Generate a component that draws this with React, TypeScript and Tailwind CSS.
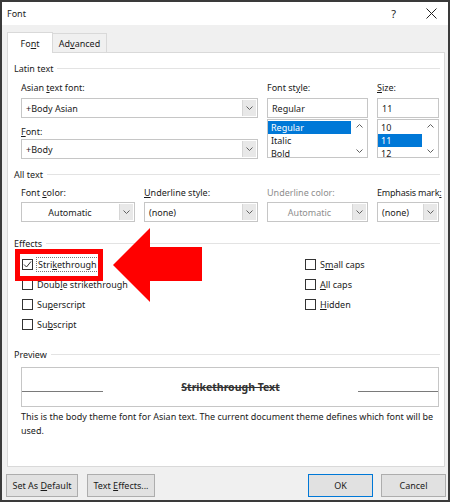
import React from 'react';

const Chev = ({ up }: { up?: boolean }) => (
  <svg width="7" height="4" viewBox="0 0 7 4">
    <polyline
      points={up ? '0.5,3.5 3.5,0.5 6.5,3.5' : '0.5,0.5 3.5,3.5 6.5,0.5'}
      fill="none"
      stroke="#606060"
      strokeWidth="1"
    />
  </svg>
);

function Combo({ value, center, disabled }: { value: string; center?: boolean; disabled?: boolean }) {
  return (
    <div className="flex h-[20px] border border-[#c6c6c6] bg-white">
      <div
        className={`flex flex-1 items-center px-[4px] ${center ? 'justify-center' : ''} ${disabled ? 'text-[#8e8e8e]' : ''}`}
      >
        {value}
      </div>
      <div className="m-px flex w-[14px] items-center justify-center border-l border-[#d6d6d6] bg-[#e8e8e8]">
        <Chev />
      </div>
    </div>
  );
}

function ListBox({ value, items, sel }: { value: string; items: string[]; sel: number }) {
  return (
    <div>
      <div className="flex h-[20px] items-center border border-[#c6c6c6] bg-white px-[4px]">{value}</div>
      <div className="mt-px flex h-[39px] border border-[#c6c6c6] bg-white">
        <div className="flex-1 pt-px">
          {items.map((it, i) => (
            <div
              key={it}
              className={`h-[13px] px-[3px] leading-[13px] ${i === sel ? 'bg-[#0078d7] text-white' : ''}`}
            >
              {it}
            </div>
          ))}
        </div>
        <div className="flex w-[16px] flex-col items-center justify-between py-[4px]">
          <Chev up />
          <Chev />
        </div>
      </div>
    </div>
  );
}

function Group({ title }: { title: string }) {
  return (
    <div className="flex items-center pl-[6px] pr-[4px]">
      <span>{title}</span>
      <div className="ml-[4px] h-px flex-1 bg-[#e3e3e3]" />
    </div>
  );
}

function Check({ label, checked }: { label: React.ReactNode; checked?: boolean }) {
  return (
    <div className="flex h-[20px] items-center">
      <div className="flex h-[11px] w-[11px] items-center justify-center border border-[#333] bg-white">
        {checked && (
          <svg width="9" height="9" viewBox="0 0 9 9">
            <polyline points="1,4.5 3.5,7 8,1.5" fill="none" stroke="#333" strokeWidth="1" />
          </svg>
        )}
      </div>
      <span className={`ml-[3px] px-px ${checked ? 'border border-dotted border-[#777]' : ''}`}>{label}</span>
    </div>
  );
}

function Button({ children, className }: { children: React.ReactNode; className: string }) {
  return (
    <div className={`flex h-[23px] items-center justify-center border bg-[#e1e1e1] ${className}`}>
      <span>{children}</span>
    </div>
  );
}

export default function App() {
  return (
    <div className="relative flex h-[502px] w-[450px] flex-col border-2 border-[#3a3a3a] bg-[#f0f0f0] font-['Noto_Sans',sans-serif] text-[9px] leading-[13px] text-[#1b1b1b]">
      {/* title bar */}
      <div className="flex h-[23px] items-center bg-white pl-[5px]">
        <span className="flex-1">Font</span>
        <span className="mr-[30px] text-[11px]">?</span>
        <svg width="11" height="11" viewBox="0 0 11 11" className="mr-[11px]">
          <path d="M0.5 0.5 L10.5 10.5 M10.5 0.5 L0.5 10.5" stroke="#222" strokeWidth="1" />
        </svg>
      </div>

      {/* tabs */}
      <div className="mt-[7px] flex items-end pl-[5px]">
        <div className="relative z-10 -mb-px flex h-[21px] w-[46px] items-center justify-center border border-b-0 border-[#d9d9d9] bg-white">
          <span>
            Fo<u>n</u>t
          </span>
        </div>
        <div className="flex h-[19px] w-[54px] items-center justify-center border border-l-0 border-b-0 border-[#d9d9d9]">
          <span>
            Ad<u>v</u>anced
          </span>
        </div>
      </div>

      {/* panel */}
      <div className="ml-[5px] flex h-[415px] w-[438px] flex-col border border-[#d9d9d9] bg-white pt-[9px]">
        <Group title="Latin text" />

        <div className="ml-[13px] mt-[6px] grid grid-cols-[237px_101px_62px] gap-x-[9px]">
          <div>
            <div className="mb-[4px]">
              Asian <u>t</u>ext font:
            </div>
            <Combo value="+Body Asian" />
            <div className="mb-px mt-[7px]">
              <u>F</u>ont:
            </div>
            <Combo value="+Body" />
          </div>
          <div>
            <div className="mb-[4px]">
              Font st<u>y</u>le:
            </div>
            <ListBox value="Regular" items={['Regular', 'Italic', 'Bold']} sel={0} />
          </div>
          <div>
            <div className="mb-[4px]">
              <u>S</u>ize:
            </div>
            <ListBox value="11" items={['10', '11', '12']} sel={1} />
          </div>
        </div>

        <div className="mt-[9px]">
          <Group title="All text" />
        </div>
        <div className="ml-[13px] mt-[5px] grid grid-cols-[114px_114px_101px_62px] gap-x-[9px]">
          <div>
            <div className="mb-[3px]">
              Font <u>c</u>olor:
            </div>
            <Combo value="Automatic" center />
          </div>
          <div>
            <div className="mb-[3px]">
              <u>U</u>nderline style:
            </div>
            <Combo value="(none)" />
          </div>
          <div>
            <div className="mb-[3px] text-[#8e8e8e]">Underline color:</div>
            <Combo value="Automatic" center disabled />
          </div>
          <div>
            <div className="mb-[3px] whitespace-nowrap tracking-[-0.2px]">
              Emphasis mark<u>:</u>
            </div>
            <Combo value="(none)" />
          </div>
        </div>

        <div className="mt-[15px]">
          <Group title="Effects" />
        </div>
        <div className="mt-[4px] flex">
          <div className="ml-[14px] w-[283px]">
            <Check
              checked
              label={
                <>
                  Stri<u>k</u>ethrough
                </>
              }
            />
            <Check
              label={
                <>
                  Doub<u>l</u>e strikethrough
                </>
              }
            />
            <Check
              label={
                <>
                  Su<u>p</u>erscript
                </>
              }
            />
            <Check
              label={
                <>
                  Su<u>b</u>script
                </>
              }
            />
          </div>
          <div>
            <Check
              label={
                <>
                  S<u>m</u>all caps
                </>
              }
            />
            <Check
              label={
                <>
                  <u>A</u>ll caps
                </>
              }
            />
            <Check
              label={
                <>
                  <u>H</u>idden
                </>
              }
            />
          </div>
        </div>

        <div className="mt-[14px]">
          <Group title="Preview" />
        </div>
        <div className="ml-[13px] mt-[6px] flex h-[40px] w-[418px] items-center border border-[#c6c6c6]">
          <div className="mt-[8px] h-px w-[81px] bg-[#7a7a7a]" />
          <div className="flex flex-1 justify-center text-[10.5px] font-bold text-[#333] line-through">
            Strikethrough Text
          </div>
          <div className="mt-[8px] h-px w-[80px] bg-[#7a7a7a]" />
        </div>
        <div className="ml-[13px] mt-[3px] w-[420px] leading-[14px]">
          This is the body theme font for Asian text. The current document theme defines which font will be used.
        </div>
      </div>

      {/* buttons */}
      <div className="mt-[7px] flex">
        <Button className="ml-[4px] w-[72px] border-[#adadad]">
          Set As <u>D</u>efault
        </Button>
        <Button className="ml-[9px] w-[68px] border-[#adadad]">
          Text <u>E</u>ffects...
        </Button>
        <Button className="ml-auto w-[65px] border-[#0078d7]">OK</Button>
        <Button className="ml-[8px] mr-[2px] w-[65px] border-[#adadad]">Cancel</Button>
      </div>

      {/* annotation overlay: red box and arrow */}
      <div className="pointer-events-none absolute left-[13px] top-[247px] h-[32px] w-[88px] border-[5px] border-[#ff0000]" />
      <svg className="pointer-events-none absolute left-[111px] top-[226px]" width="90" height="74" viewBox="0 0 90 74">
        <polygon points="0,37 37,0 37,19 89,19 89,53 37,53 37,74" fill="#ff0000" />
      </svg>
    </div>
  );
}
